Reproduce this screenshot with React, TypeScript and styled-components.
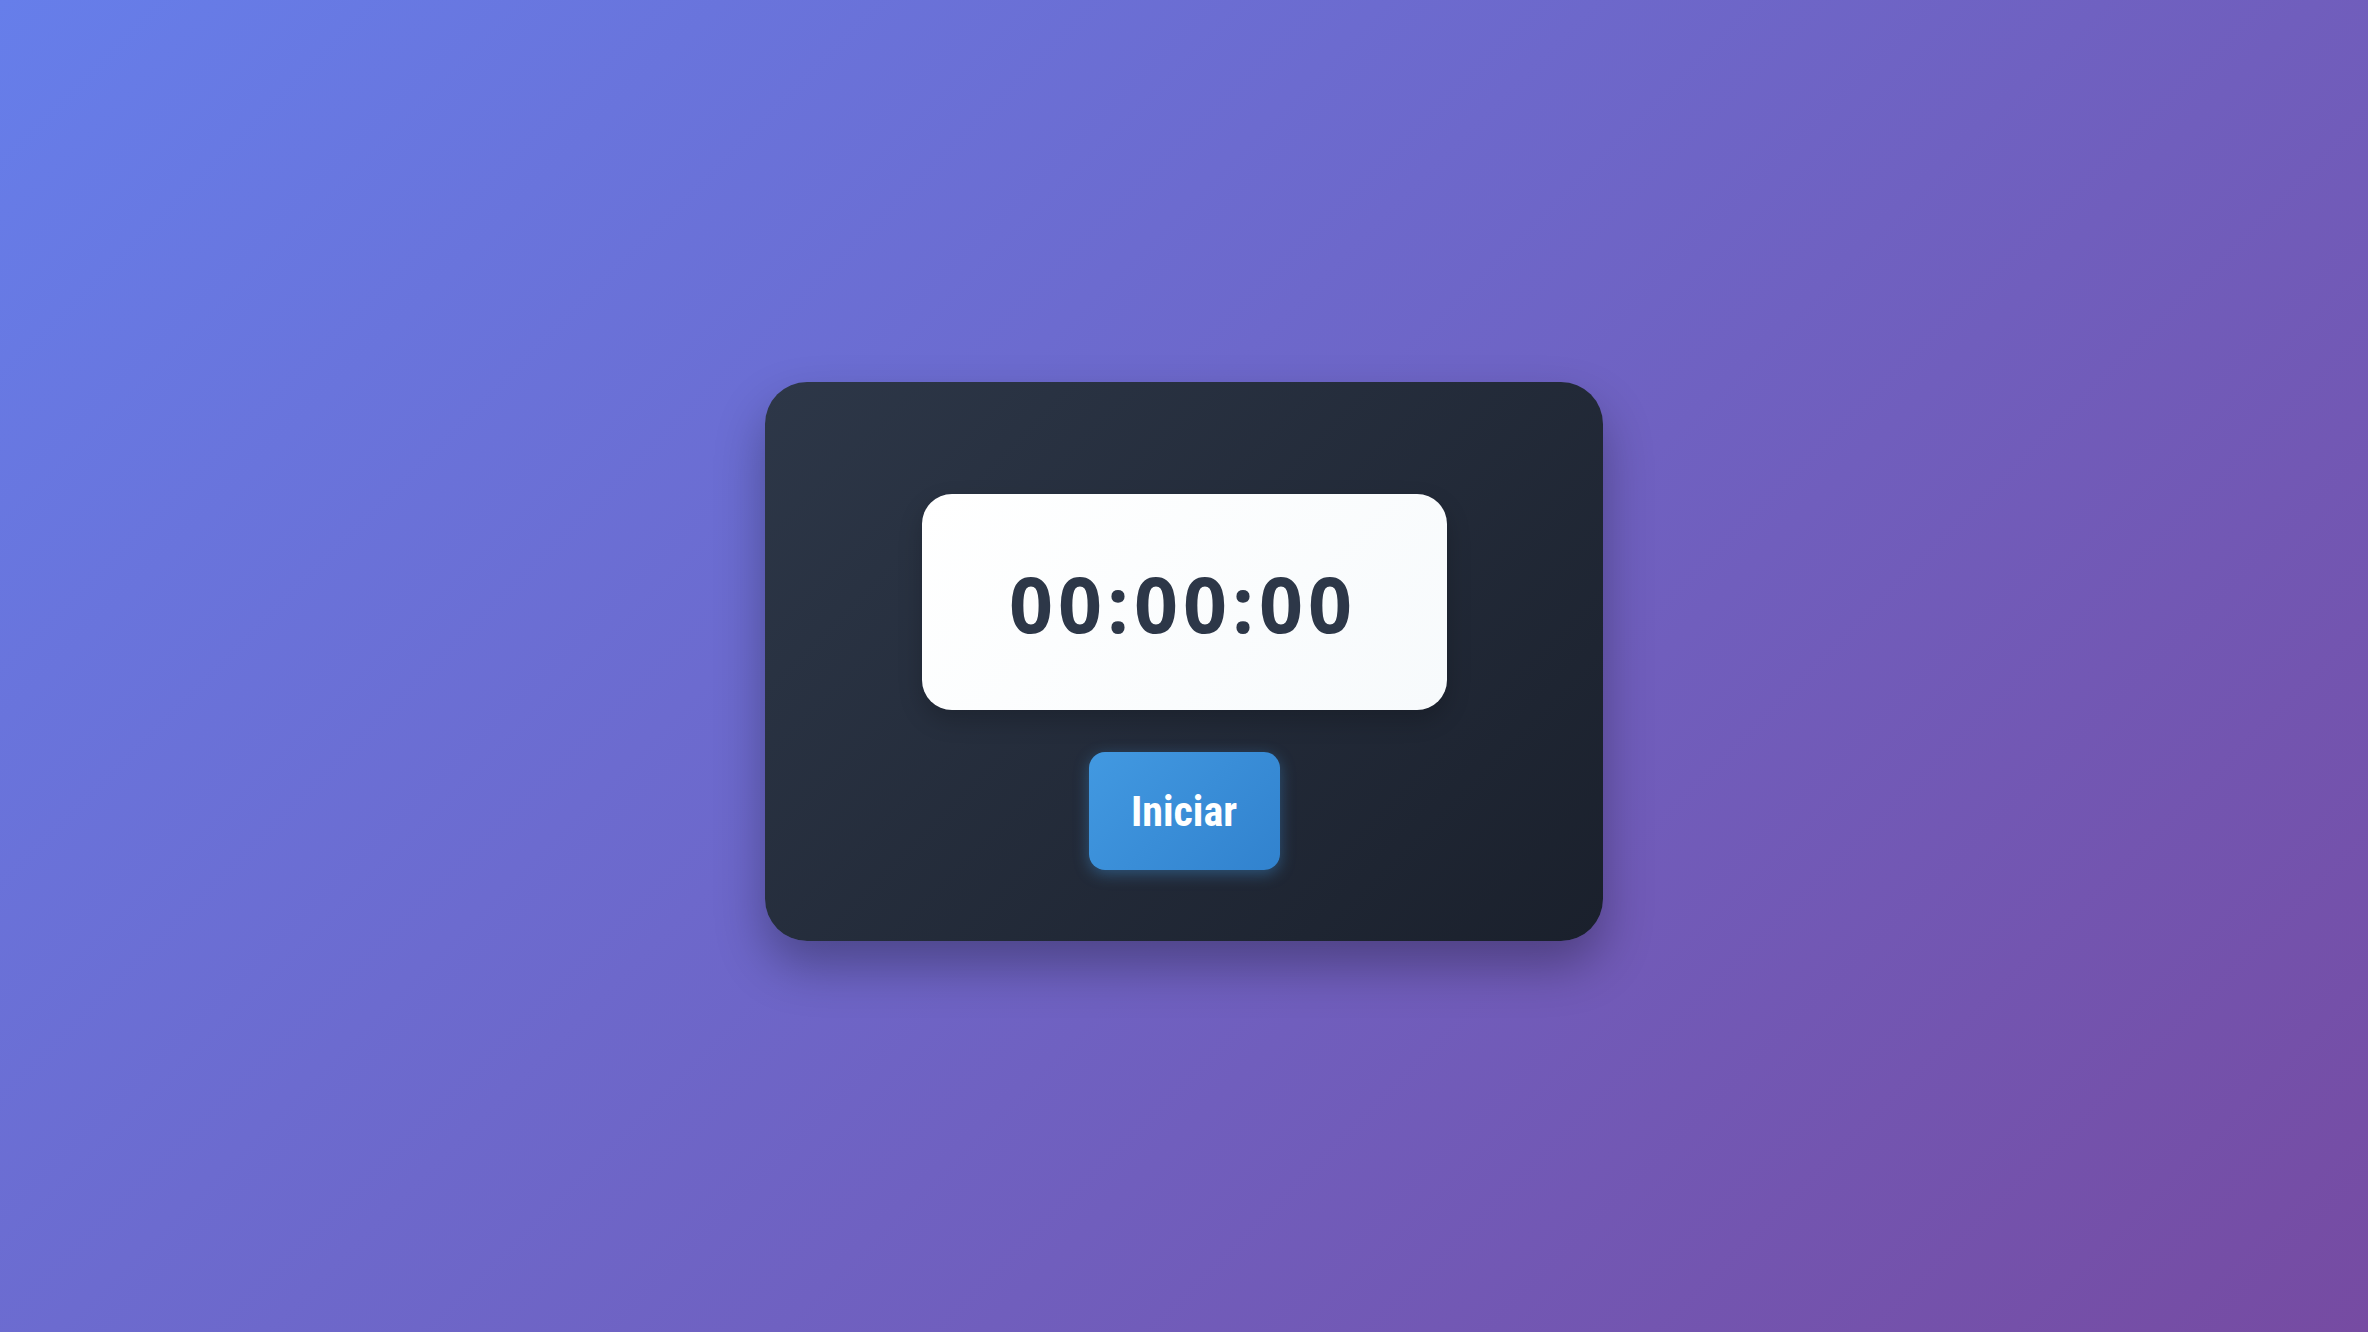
import styled, { createGlobalStyle } from "styled-components";

const GlobalStyle = createGlobalStyle`
  * {
    box-sizing: border-box;
  }

  body {
    margin: 0;
    font-family: "Open Sans", "Liberation Sans", sans-serif;
  }
`;

const App = () => {
  return (
    <>
      <GlobalStyle />
      <Page>
        <Card>
          <Display>
            <Time>00:00:00</Time>
          </Display>
          <StartButton type="button">Iniciar</StartButton>
        </Card>
      </Page>
    </>
  );
};

export default App;

const Page = styled.div`
  display: flex;
  align-items: center;
  justify-content: center;
  min-height: 100vh;
  padding-bottom: 9px;
  background: linear-gradient(135deg, #667eea 0%, #764ba2 100%);
`;

const Card = styled.div`
  display: flex;
  flex-direction: column;
  align-items: center;
  gap: 42px;
  width: 838px;
  height: 559px;
  padding: 112px 0 0;
  background: linear-gradient(135deg, #2d3748 0%, #1a202c 100%);
  border-radius: 42px;
  box-shadow: 0 25px 50px rgba(0, 0, 0, 0.3);
`;

const Display = styled.div`
  display: flex;
  align-items: center;
  justify-content: center;
  width: 525px;
  height: 216px;
  padding: 2px 2px 0 0;
  background: linear-gradient(135deg, #ffffff 0%, #f7fafc 100%);
  border-radius: 30px;
  box-shadow: 0 10px 25px rgba(0, 0, 0, 0.2);
`;

const Time = styled.span`
  font-family: "Open Sans", "Noto Sans", sans-serif;
  font-weight: 700;
  font-size: 77px;
  letter-spacing: 5px;
  color: #2d3748;
`;

const StartButton = styled.button`
  width: 191px;
  height: 118px;
  padding: 0;
  border: 0;
  border-radius: 16px;
  background: linear-gradient(135deg, #4299e1 0%, #3182ce 100%);
  box-shadow: 0 4px 15px rgba(66, 153, 225, 0.4);
  color: #ffffff;
  font-family: "Liberation Sans Narrow", "Roboto Condensed", "Liberation Sans", sans-serif;
  font-weight: 700;
  font-size: 42px;
  cursor: pointer;
`;
